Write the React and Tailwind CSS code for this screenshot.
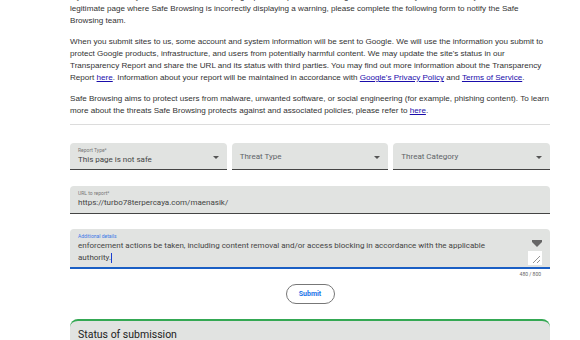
function SelectBox({ label, value, placeholder }) {
  return (
    <div className="relative h-[27px] bg-[#e1e3e1] rounded-t-[4px] border-b border-[#444] px-[8px]">
      {label ? (
        <div className="pt-[3px]">
          <div className="text-[5px] leading-[8px] text-[#777]">{label}</div>
          <div className="text-[8px] leading-[12px] text-[#444]">{value}</div>
        </div>
      ) : (
        <div className="pt-[8px] text-[8px] leading-[12px] text-[#5f6368]">{placeholder}</div>
      )}
      <div className="absolute right-[8px] top-[13px] w-0 h-0 border-l-[3px] border-r-[3px] border-t-[3px] border-l-transparent border-r-transparent border-t-[#555]"></div>
    </div>
  )
}

function App() {
  return (
    <div className="w-[580px] h-[340px] overflow-hidden bg-white font-['Liberation_Sans',Arial,sans-serif]">
      <div className="ml-[70px] w-[480px] mt-[-9px]">

        {/* intro text */}
        <div className="text-[8.1px] leading-[12px] text-[#333] flex flex-col gap-[9px]">
          <p>If you believe that you have found an unsafe page, please report it to us using the form below. If you believe that you have reached a<br />legitimate page where Safe Browsing is incorrectly displaying a warning, please complete the following form to notify the Safe Browsing team.</p>
          <p>When you submit sites to us, some account and system information will be sent to Google. We will use the information you submit to protect Google products, infrastructure, and users from potentially harmful content. We may update the site's status in our Transparency Report and share the URL and its status with third parties. You may find out more information about the Transparency Report <a className="text-[#1a0dab] underline">here</a>. Information about your report will be maintained in accordance with <a className="text-[#1a0dab] underline">Google's Privacy Policy</a> and <a className="text-[#1a0dab] underline">Terms of Service</a>.</p>
          <p>Safe Browsing aims to protect users from malware, unwanted software, or social engineering (for example, phishing content). To learn more about the threats Safe Browsing protects against and associated policies, please refer to <a className="text-[#1a0dab] underline">here</a>.</p>
        </div>

        <div className="mt-[7px] border-t border-[#dcdcdc]"></div>

        {/* form */}
        <div className="font-['Roboto',sans-serif]">
          <div className="mt-[18px] grid grid-cols-3 gap-[5px]">
            <SelectBox label="Report Type*" value="This page is not safe" />
            <SelectBox placeholder="Threat Type" />
            <SelectBox placeholder="Threat Category" />
          </div>

          <div className="mt-[16px] h-[28px] bg-[#e1e3e1] rounded-t-[4px] border-b border-[#444] px-[8px] pt-[3px]">
            <div className="text-[5px] leading-[8px] text-[#777]">URL to report*</div>
            <div className="text-[8px] leading-[12px] text-[#444]">https://turbo78terpercaya.com/maenasik/</div>
          </div>

          <div className="relative mt-[15px] h-[40px] bg-[#e1e3e1] rounded-t-[4px] border-b-2 border-[#1a5fc4] px-[8px] pt-[3px]">
            <div className="text-[5px] leading-[8px] text-[#3b78e7]">Additional details</div>
            <div className="text-[8px] leading-[12px] text-[#444] pr-[50px]">
              enforcement actions be taken, including content removal and/or access blocking in accordance with the applicable authority.<span className="inline-block w-px h-[10px] bg-[#1a3fd0] align-middle"></span>
            </div>
            <div className="absolute right-[8px] top-[11px] flex flex-col items-center">
              <div className="w-[10px] h-[2px] bg-[#666]"></div>
              <div className="w-0 h-0 border-l-[5px] border-r-[5px] border-t-[5px] border-l-transparent border-r-transparent border-t-[#666]"></div>
            </div>
            <div className="absolute right-[8px] bottom-[2px] w-[14px] h-[14px] bg-white">
              <svg width="14" height="14" viewBox="0 0 14 14">
                <line x1="5" y1="12" x2="12" y2="5" stroke="#777" strokeWidth="0.8" />
                <line x1="9" y1="12" x2="12" y2="9" stroke="#777" strokeWidth="0.8" />
              </svg>
            </div>
          </div>
          <div className="mt-[2px] pr-[9px] text-right text-[5px] leading-[7px] text-[#666]">480 / 800</div>

          <div className="mt-[6px] flex justify-center">
            <button className="w-[49px] h-[20px] rounded-full border border-[#777] text-[7px] font-bold text-[#1a73e8]">Submit</button>
          </div>

          <div className="mt-[15px] h-[40px] bg-[#e1e3e1] rounded-t-[8px] border-t-2 border-[#34a853] px-[8px] pt-[7px]">
            <div className="text-[10.5px] leading-[14px] text-[#222]">Status of submission</div>
          </div>
        </div>
      </div>
    </div>
  )
}

export default App
